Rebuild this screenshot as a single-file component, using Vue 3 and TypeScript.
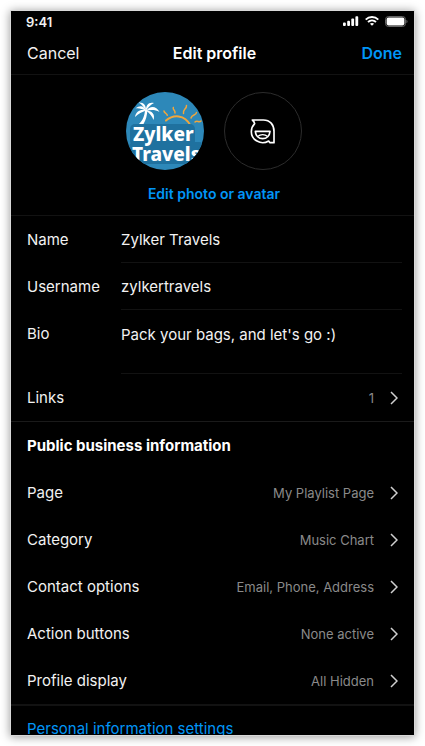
<script setup lang="ts">
import { ref } from 'vue'

interface InfoRow {
  label: string
  value: string
}

const name = ref('Zylker Travels')
const username = ref('zylkertravels')
const bio = ref("Pack your bags, and let's go :)")

const businessRows: InfoRow[] = [
  { label: 'Page', value: 'My Playlist Page' },
  { label: 'Category', value: 'Music Chart' },
  { label: 'Contact options', value: 'Email, Phone, Address' },
  { label: 'Action buttons', value: 'None active' },
  { label: 'Profile display', value: 'All Hidden' },
]
</script>

<template>
  <div class="stage">
    <main class="phone">
      <div class="status">
        <span class="clock">9:41</span>
        <div class="indicators">
          <svg width="16" height="10" viewBox="0 0 16 10" fill="#fff" aria-hidden="true">
            <rect x="0" y="6.5" width="2.8" height="3.5" rx="0.9" />
            <rect x="4.2" y="4.8" width="2.8" height="5.2" rx="0.9" />
            <rect x="8.3" y="2.6" width="2.8" height="7.4" rx="0.9" />
            <rect x="12.4" y="0.2" width="2.8" height="9.8" rx="0.9" />
          </svg>
          <svg width="14" height="10" viewBox="0 0 14 10" fill="none" stroke="#fff" stroke-width="1.9" aria-hidden="true">
            <path d="M0.7 3.6C4.2 0.2 9.8 0.2 13.3 3.6" />
            <path d="M3 6C5.3 3.9 8.7 3.9 11 6" />
            <path d="M7 9.8L4.9 7.7C6.1 6.7 7.9 6.7 9.1 7.7Z" fill="#fff" stroke="none" />
          </svg>
          <svg width="23" height="11" viewBox="0 0 23 11" aria-hidden="true">
            <rect x="0.5" y="0.5" width="20" height="10" rx="3" fill="none" stroke="#666" />
            <rect x="1.6" y="1.6" width="17.8" height="7.8" rx="1.8" fill="#fff" />
            <path d="M21.5 3.8C22.8 4.3 22.8 6.7 21.5 7.2Z" fill="#777" />
          </svg>
        </div>
      </div>

      <header class="nav">
        <button type="button" class="cancel">Cancel</button>
        <h1>Edit profile</h1>
        <button type="button" class="done">Done</button>
      </header>

      <section class="photos">
        <div class="avatars">
          <svg class="avatar" viewBox="0 0 78 78" role="img" aria-label="Profile photo">
            <defs>
              <clipPath id="photo-clip"><circle cx="39" cy="39" r="39" /></clipPath>
            </defs>
            <g clip-path="url(#photo-clip)">
              <rect width="78" height="78" fill="#2d88b9" />
              <g fill="none" stroke="#f0a63c" stroke-linecap="round">
                <path d="M40 28.6C47 22.5 58.5 22 64.5 33.5" stroke-width="2" />
                <path d="M38 19C38.5 21.5 40.5 20.5 41.3 23.2" stroke-width="1.5" />
                <path d="M47.3 15.5C46.5 18 49.5 18 49 21" stroke-width="1.5" />
                <path d="M60.5 13.5C60.8 17 56.5 17.5 57.5 21.5" stroke-width="1.5" />
                <path d="M70.5 20.5C70 24 66 22 65 26" stroke-width="1.5" />
                <path d="M75 29C73 31 71 28 69 30" stroke-width="1.5" />
              </g>
              <g fill="#fff">
                <path d="M19 18C18.5 24 17 28 13 32L17.5 32C20 28 21 23 21.5 18Z" />
                <path d="M20 19C18.5 14 14 12.5 9.5 16.5C13 16 16 17 20 19Z" />
                <path d="M20 19C20.5 13.5 17.5 10 12.5 10.5C16 12.5 18 15 20 19Z" />
                <path d="M20 19C19.5 13 23 9.5 28 11C25 12.5 22.5 14.5 20 19Z" />
                <path d="M20 19C24 13.5 30 13.5 33.5 20C29 17.5 25 17.5 20 19Z" />
                <path d="M20 18.5C26 18.5 29.5 22.5 27.5 28C26 24 24 21.5 20 18.5Z" />
                <path d="M20 18.5C14.5 17 10 19 9 25C12.5 21.5 16 20 20 18.5Z" />
              </g>
              <g fill="#1f719f">
                <rect x="4" y="32" width="65" height="22" rx="5" />
                <rect x="3" y="50" width="75" height="22" rx="5" />
              </g>
              <g class="brand">
                <text x="7" y="49">Zylker</text>
                <text x="6" y="69">Travels</text>
              </g>
            </g>
          </svg>
          <div class="avatar-slot">
            <svg width="26" height="27" viewBox="108 98 78 81" fill="none" stroke="#fff" stroke-width="5" stroke-linejoin="round" aria-hidden="true">
              <path d="M115 104H148C168 104 180 118 180 138V172H168L164 167C140 181 112 163 112 139C112 129 116 121 122 115C121 110 119 107 115 104Z" />
              <path d="M124 138H168C167 151 158 160 146 160C134 160 125 151 124 138Z" />
              <path d="M132 153C139 146 153 146 160 153" stroke-width="4" />
            </svg>
          </div>
        </div>
        <button type="button" class="edit-photo">Edit photo or avatar</button>
      </section>

      <form class="fields" @submit.prevent>
        <div class="field">
          <label for="name">Name</label>
          <div class="control"><input id="name" v-model="name" type="text" /></div>
        </div>
        <div class="field">
          <label for="username">Username</label>
          <div class="control"><input id="username" v-model="username" type="text" /></div>
        </div>
        <div class="field bio">
          <label for="bio">Bio</label>
          <div class="control"><textarea id="bio" v-model="bio" rows="2"></textarea></div>
        </div>
        <button type="button" class="row">
          <span>Links</span>
          <span class="value">1</span>
          <svg class="chevron" viewBox="0 0 8 14" aria-hidden="true"><path d="M1 1L7 7L1 13" /></svg>
        </button>
      </form>

      <section class="business">
        <h2>Public business information</h2>
        <button v-for="row in businessRows" :key="row.label" type="button" class="row">
          <span>{{ row.label }}</span>
          <span class="value">{{ row.value }}</span>
          <svg class="chevron" viewBox="0 0 8 14" aria-hidden="true"><path d="M1 1L7 7L1 13" /></svg>
        </button>
      </section>

      <a href="#personal" class="personal">Personal information settings</a>
    </main>
  </div>
</template>

<style>
body {
  background: #fff;
}
</style>

<style scoped>
.stage {
  box-sizing: border-box;
  height: 100vh;
  padding: 11px;
  overflow: hidden;
  font-family: Inter, "Liberation Sans", sans-serif;
}

.phone {
  height: 100%;
  overflow: hidden;
  background: #000;
  color: #f2f2f2;
  font-size: 15px;
  line-height: 20px;
  box-shadow: 0 0 0 1px #d8d8d8, 0 1px 9px 1px rgba(0, 0, 0, 0.4);
}

button,
input,
textarea {
  margin: 0;
  padding: 0;
  border: 0;
  background: none;
  color: inherit;
  font: inherit;
}

.status {
  display: flex;
  align-items: center;
  justify-content: space-between;
  height: 20px;
  padding: 0 6px 0 15px;
}

.clock {
  padding-top: 2px;
  font-size: 13px;
  font-weight: 600;
}

.indicators {
  display: flex;
  align-items: center;
  gap: 6px;
}

.nav {
  display: grid;
  grid-template-columns: 1fr auto 1fr;
  align-items: center;
  height: 43px;
  padding: 0 12px 0 16px;
  border-bottom: 1px solid #121212;
  font-size: 16px;
}

.nav h1 {
  margin: 0;
  font-size: 16px;
  font-weight: 600;
  color: #fff;
}

.cancel {
  justify-self: start;
}

.done {
  justify-self: end;
  color: #0095f6;
  font-weight: 600;
}

.photos {
  display: flex;
  flex-direction: column;
  align-items: center;
  gap: 14px;
  padding: 17px 0 11px 3px;
  border-bottom: 1px solid #121212;
}

.avatars {
  display: flex;
  gap: 20px;
}

.avatar {
  width: 78px;
  height: 78px;
}

.brand {
  fill: #fff;
  font-family: "Noto Sans", sans-serif;
  font-size: 19px;
  font-weight: 800;
}

.avatar-slot {
  box-sizing: border-box;
  display: grid;
  place-items: center;
  width: 78px;
  height: 78px;
  border: 1px solid #2c2c2c;
  border-radius: 50%;
}

.edit-photo {
  color: #0095f6;
  font-size: 14px;
  font-weight: 600;
}

.fields {
  border-bottom: 1px solid #1a1a1a;
}

.field {
  display: grid;
  grid-template-columns: 94px 1fr;
  padding: 0 12px 0 16px;
}

.field label {
  padding-top: 14px;
}

.control {
  display: flex;
  height: 46px;
  border-bottom: 1px solid #121212;
}

.control input,
.control textarea {
  width: 100%;
  outline: none;
  font-size: 15px;
  line-height: 22px;
}

.control input {
  padding-top: 2px;
}

.bio .control {
  height: 63px;
}

.control textarea {
  padding-top: 14px;
  resize: none;
  overflow: hidden;
}

.row {
  display: flex;
  align-items: center;
  width: 100%;
  height: 47px;
  padding: 0 16px;
  text-align: left;
}

.value {
  margin-left: auto;
  color: #8a8a8a;
  font-size: 13px;
}

.chevron {
  width: 8px;
  height: 14px;
  margin-left: 16px;
  fill: none;
  stroke: #d0d0d0;
  stroke-width: 1.5px;
}

.business {
  border-bottom: 2px solid #121212;
}

.business h2 {
  margin: 0;
  padding: 14px 16px 13px;
  color: #fff;
  font-size: 15px;
  font-weight: 700;
}

.personal {
  display: block;
  padding: 13px 16px;
  color: #0095f6;
  text-decoration: none;
}
</style>
